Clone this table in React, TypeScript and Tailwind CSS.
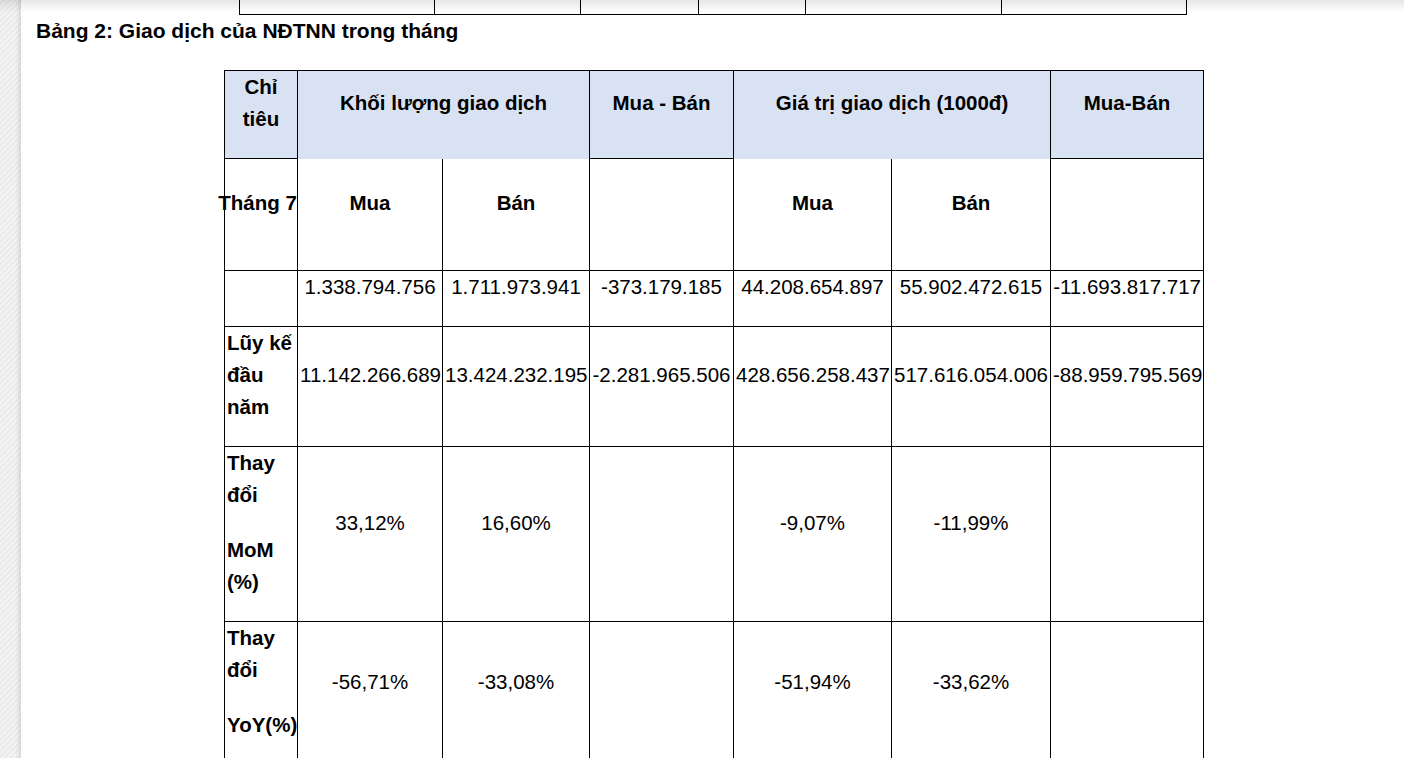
import React from 'react';

const Cell = ({ children, className = '' }: { children?: React.ReactNode; className?: string }) => (
  <td className={`border border-black p-0 px-[2px] align-middle ${className}`}>
    {children !== undefined && <p className="leading-[32px] mb-[23px]">{children}</p>}
  </td>
);

const Head = ({ children, className = '', colSpan }: { children: React.ReactNode; className?: string; colSpan?: number }) => (
  <th colSpan={colSpan} className={`border border-black p-0 px-[2px] align-middle bg-[#d9e2f3] font-bold text-center ${className}`}>
    <p className="leading-[32px] mb-[23px]">{children}</p>
  </th>
);

const App = () => {
  return (
    <div className="relative h-[758px] overflow-hidden flex bg-white text-black font-['Liberation_Sans',Arial,sans-serif] text-[20.5px]">
      {/* left desk margin */}
      <div className="w-[21px] shrink-0 bg-[repeating-linear-gradient(135deg,#f3f3f3_0px,#f3f3f3_2px,#ebebeb_2px,#ebebeb_4px)] shadow-[inset_-5px_0_4px_-3px_rgba(0,0,0,0.12)]"></div>

      <div className="flex-1">
        {/* bottom of previous table */}
        <div className="flex ml-[218px] h-[15px]">
          <div className="w-[196px] border-l border-r border-b border-black"></div>
          <div className="w-[146px] border-r border-b border-black"></div>
          <div className="w-[118px] border-r border-b border-black"></div>
          <div className="w-[107px] border-r border-b border-black"></div>
          <div className="w-[196px] border-r border-b border-black"></div>
          <div className="w-[185px] border-r border-b border-black"></div>
        </div>

        <p className="pl-[15px] leading-[32px] mb-[23px] font-bold text-[21px]">Bảng 2: Giao dịch của NĐTNN trong tháng</p>

        <table className="ml-[203px] w-[979px] table-fixed border-collapse">
          <colgroup>
            <col className="w-[73px]" />
            <col className="w-[145px]" />
            <col className="w-[147px]" />
            <col className="w-[144px]" />
            <col className="w-[158px]" />
            <col className="w-[159px]" />
            <col className="w-[153px]" />
          </colgroup>
          <thead>
            <tr>
              <Head>Chỉ<br />tiêu</Head>
              <Head colSpan={2} className="border-b-0">Khối lượng giao dịch</Head>
              <Head>Mua - Bán</Head>
              <Head colSpan={2} className="border-b-0">Giá trị giao dịch (1000đ)</Head>
              <Head>Mua-Bán</Head>
            </tr>
          </thead>
          <tbody>
            <tr className="h-[112px] font-bold text-center">
              <td className="border border-black p-0 align-middle">
                <div className="flex justify-center whitespace-nowrap leading-[32px] mb-[23px] mr-[7px]">Tháng 7</div>
              </td>
              <Cell className="border-t-0">Mua</Cell>
              <Cell className="border-t-0">Bán</Cell>
              <Cell />
              <Cell className="border-t-0">Mua</Cell>
              <Cell className="border-t-0">Bán</Cell>
              <Cell />
            </tr>
            <tr className="text-center whitespace-nowrap">
              <Cell />
              <Cell>1.338.794.756</Cell>
              <Cell>1.711.973.941</Cell>
              <Cell>-373.179.185</Cell>
              <Cell>44.208.654.897</Cell>
              <Cell>55.902.472.615</Cell>
              <Cell>-11.693.817.717</Cell>
            </tr>
            <tr className="text-center whitespace-nowrap">
              <Cell className="text-left font-bold">Lũy kế<br />đầu<br />năm</Cell>
              <Cell>11.142.266.689</Cell>
              <Cell>13.424.232.195</Cell>
              <Cell>-2.281.965.506</Cell>
              <Cell>428.656.258.437</Cell>
              <Cell>517.616.054.006</Cell>
              <Cell>-88.959.795.569</Cell>
            </tr>
            <tr className="text-center whitespace-nowrap">
              <td className="border border-black p-0 px-[2px] align-middle text-left font-bold">
                <p className="leading-[32px] mb-[23px]">Thay<br />đổi</p>
                <p className="leading-[32px] mb-[23px]">MoM<br />(%)</p>
              </td>
              <Cell>33,12%</Cell>
              <Cell>16,60%</Cell>
              <Cell />
              <Cell>-9,07%</Cell>
              <Cell>-11,99%</Cell>
              <Cell />
            </tr>
            <tr className="text-center whitespace-nowrap">
              <td className="border border-black p-0 px-[2px] align-middle text-left font-bold">
                <p className="leading-[32px] mb-[23px]">Thay<br />đổi</p>
                <p className="leading-[32px] mb-[23px]">YoY(%)</p>
              </td>
              <Cell>-56,71%</Cell>
              <Cell>-33,08%</Cell>
              <Cell />
              <Cell>-51,94%</Cell>
              <Cell>-33,62%</Cell>
              <Cell />
            </tr>
          </tbody>
        </table>
      </div>

      {/* toolbar shadow over the top of the page */}
      <div className="absolute top-0 inset-x-0 h-[12px] bg-linear-to-b from-black/10 to-transparent pointer-events-none"></div>
    </div>
  );
};

export default App;
